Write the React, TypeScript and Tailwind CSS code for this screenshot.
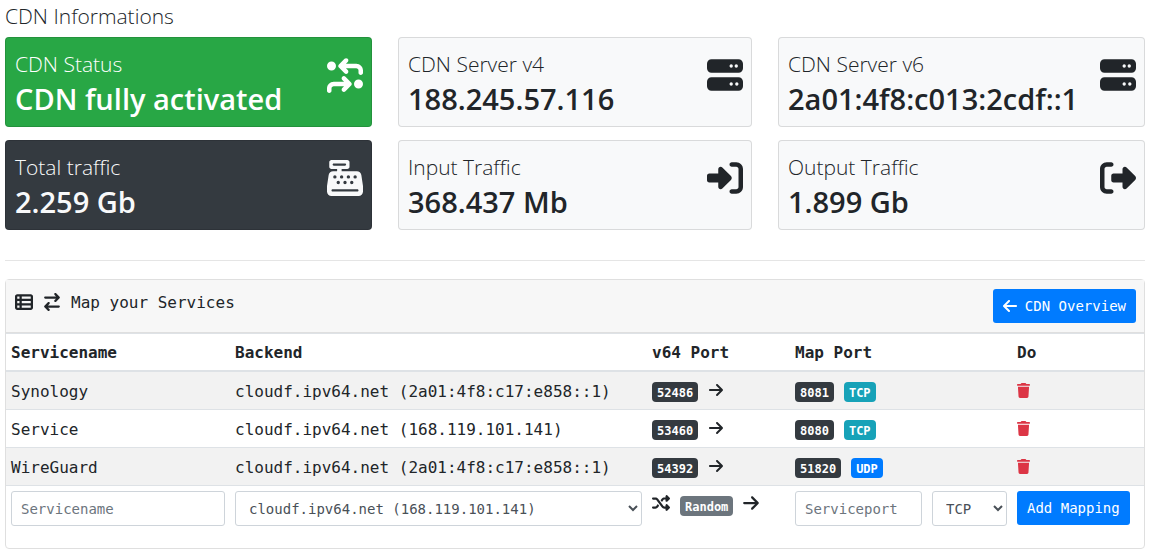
import React, { useState } from 'react';
import {
  FaArrowLeft, FaArrowRight, FaArrowRightArrowLeft, FaArrowsTurnToDots, FaCashRegister,
  FaRightFromBracket, FaRightToBracket, FaServer, FaShuffle, FaTableList, FaTrash,
} from 'react-icons/fa6';
import type { IconType } from 'react-icons';
import clsx from 'clsx';

type Tone = 'success' | 'dark' | 'light';

type Mapping = {
  name: string;
  backend: string;
  v64Port: number;
  mapPort: number;
  protocol: 'TCP' | 'UDP';
};

const stats: { label: string; value: string; tone: Tone; icon: IconType }[] = [
  { label: 'CDN Status', value: 'CDN fully activated', tone: 'success', icon: FaArrowsTurnToDots },
  { label: 'CDN Server v4', value: '188.245.57.116', tone: 'light', icon: FaServer },
  { label: 'CDN Server v6', value: '2a01:4f8:c013:2cdf::1', tone: 'light', icon: FaServer },
  { label: 'Total traffic', value: '2.259 Gb', tone: 'dark', icon: FaCashRegister },
  { label: 'Input Traffic', value: '368.437 Mb', tone: 'light', icon: FaRightToBracket },
  { label: 'Output Traffic', value: '1.899 Gb', tone: 'light', icon: FaRightFromBracket },
];

const initialMappings: Mapping[] = [
  { name: 'Synology', backend: 'cloudf.ipv64.net (2a01:4f8:c17:e858::1)', v64Port: 52486, mapPort: 8081, protocol: 'TCP' },
  { name: 'Service', backend: 'cloudf.ipv64.net (168.119.101.141)', v64Port: 53460, mapPort: 8080, protocol: 'TCP' },
  { name: 'WireGuard', backend: 'cloudf.ipv64.net (2a01:4f8:c17:e858::1)', v64Port: 54392, mapPort: 51820, protocol: 'UDP' },
];

const control = 'h-[35px] rounded-[3px] border border-[#ced4da] bg-white px-[9px] text-sm text-[#495057] placeholder:text-[#6c757d]';

const StatCard = ({ label, value, tone, icon: Icon }: (typeof stats)[number]) => (
  <div
    className={clsx(
      'flex h-[90px] items-start justify-between rounded border border-black/12 pl-[9px] pr-2',
      tone === 'success' && 'bg-[#28a745] text-white',
      tone === 'dark' && 'bg-[#343a40] text-[#f8f9fa]',
      tone === 'light' && 'bg-[#f8f9fa] text-[#212529]'
    )}
  >
    <div className="pt-3 whitespace-nowrap">
      <h4 className="text-[21px] leading-7 font-light">{label}</h4>
      <h2 className="text-[29px] leading-[42px] font-semibold">{value}</h2>
    </div>
    <Icon size={36} className="mt-[19px] shrink-0" />
  </div>
);

const Badge = ({ className, children }: { className: string; children: React.ReactNode }) => (
  <span className={clsx('flex h-5 items-center rounded px-[5px] pt-0.5 text-xs font-bold text-white', className)}>
    {children}
  </span>
);

export default function App() {
  const [mappings, setMappings] = useState(initialMappings);
  const [name, setName] = useState('');
  const [port, setPort] = useState('');
  const [backend, setBackend] = useState(initialMappings[1].backend);
  const [protocol, setProtocol] = useState<'TCP' | 'UDP'>('TCP');

  const handleAdd = () => {
    if (!name || !port) return;
    const v64Port = 50000 + Math.floor(Math.random() * 10000);
    setMappings([...mappings, { name, backend, v64Port, mapPort: Number(port), protocol }]);
    setName('');
    setPort('');
  };

  return (
    <div className="bg-white pr-[13px] pl-[5px] font-['Open_Sans','Noto_Sans',sans-serif] text-[#212529]">
      <h4 className="pt-0.5 text-[21px] leading-7 font-light">CDN Informations</h4>

      <div className="mt-[7px] grid grid-cols-[367fr_354fr_367fr] gap-x-[26px] gap-y-[13px]">
        {stats.map(s => <StatCard key={s.label} {...s} />)}
      </div>

      <hr className="mt-[30px] mb-[18px] border-black/10" />

      <div className="rounded border border-[#dfdfdf] pb-[17px] font-['DejaVu_Sans_Mono','Liberation_Mono',monospace]">
        <div className="flex h-[53px] items-start justify-between border-b border-[#dfdfdf] bg-[#f7f7f7] pt-[9px] pr-2 pl-[9px]">
          <h1 className="flex items-center text-base">
            <FaTableList size={18} />
            <FaArrowRightArrowLeft size={18} className="mx-2.5" />
            <span className="pt-0.5">Map your Services</span>
          </h1>
          <button className="flex h-[34px] items-center gap-2 rounded-[3px] bg-[#007bff] px-2.5 text-sm text-white">
            <FaArrowLeft className="h-4 w-3.5" />
            CDN Overview
          </button>
        </div>

        <table className="w-full table-fixed border-separate border-spacing-0 text-left">
          <thead>
            <tr className="h-[39px] [&>th]:border-t [&>th]:border-b-2 [&>th]:border-[#dee2e6] [&>th]:px-[5px] [&>th]:pt-0.5">
              <th className="w-[224px]">Servicename</th>
              <th className="w-[417px]">Backend</th>
              <th className="w-[143px]">v64 Port</th>
              <th className="w-[222px]">Map Port</th>
              <th className="w-[132px]">Do</th>
            </tr>
          </thead>
          <tbody>
            {mappings.map(m => (
              <tr key={m.v64Port} className="h-[38px] odd:bg-[#f2f2f2] [&>td]:border-b [&>td]:border-[#dee2e6] [&>td]:px-[5px] [&>td]:pt-0.5">
                <td>{m.name}</td>
                <td>{m.backend}</td>
                <td>
                  <div className="flex items-start gap-2.5">
                    <Badge className="bg-[#343a40]">{m.v64Port}</Badge>
                    <FaArrowRight className="h-4 w-4" />
                  </div>
                </td>
                <td>
                  <div className="flex items-start gap-2.5">
                    <Badge className="bg-[#343a40]">{m.mapPort}</Badge>
                    <Badge className={m.protocol === 'TCP' ? 'bg-[#17a2b8]' : 'bg-[#007bff]'}>{m.protocol}</Badge>
                  </div>
                </td>
                <td>
                  <button
                    aria-label={`Delete ${m.name}`}
                    onClick={() => setMappings(mappings.filter(x => x !== m))}
                    className="block pb-0.5 text-[#dc3545]"
                  >
                    <FaTrash className="h-[15px] w-[13px]" />
                  </button>
                </td>
              </tr>
            ))}
            <tr className="[&>td]:px-[5px] [&>td]:py-[5px] [&>td]:align-top">
              <td>
                <input
                  type="text"
                  aria-label="Servicename"
                  placeholder="Servicename"
                  value={name}
                  onChange={(e) => setName(e.target.value)}
                  className={clsx(control, 'block w-full')}
                />
              </td>
              <td>
                <select
                  aria-label="Backend"
                  value={backend}
                  onChange={(e) => setBackend(e.target.value)}
                  className={clsx(control, 'block w-full')}
                >
                  <option>cloudf.ipv64.net (168.119.101.141)</option>
                  <option>cloudf.ipv64.net (2a01:4f8:c17:e858::1)</option>
                </select>
              </td>
              <td>
                <div className="flex items-start gap-2.5 pt-[3px]">
                  <FaShuffle size={18} />
                  <div className="pt-0.5">
                    <Badge className="bg-[#6c757d]">Random</Badge>
                  </div>
                  <FaArrowRight className="h-[18px] w-4" />
                </div>
              </td>
              <td>
                <div className="flex gap-2.5">
                  <input
                    type="text"
                    aria-label="Serviceport"
                    placeholder="Serviceport"
                    value={port}
                    onChange={(e) => setPort(e.target.value)}
                    className={clsx(control, 'min-w-0 flex-1')}
                  />
                  <select
                    aria-label="Protocol"
                    value={protocol}
                    onChange={(e) => setProtocol(e.target.value as 'TCP' | 'UDP')}
                    className={clsx(control, 'w-[75px]')}
                  >
                    <option>TCP</option>
                    <option>UDP</option>
                  </select>
                </div>
              </td>
              <td>
                <button onClick={handleAdd} className="h-[34px] rounded-[3px] bg-[#007bff] px-2.5 text-sm whitespace-nowrap text-white">
                  Add Mapping
                </button>
              </td>
            </tr>
          </tbody>
        </table>
      </div>
    </div>
  );
}
